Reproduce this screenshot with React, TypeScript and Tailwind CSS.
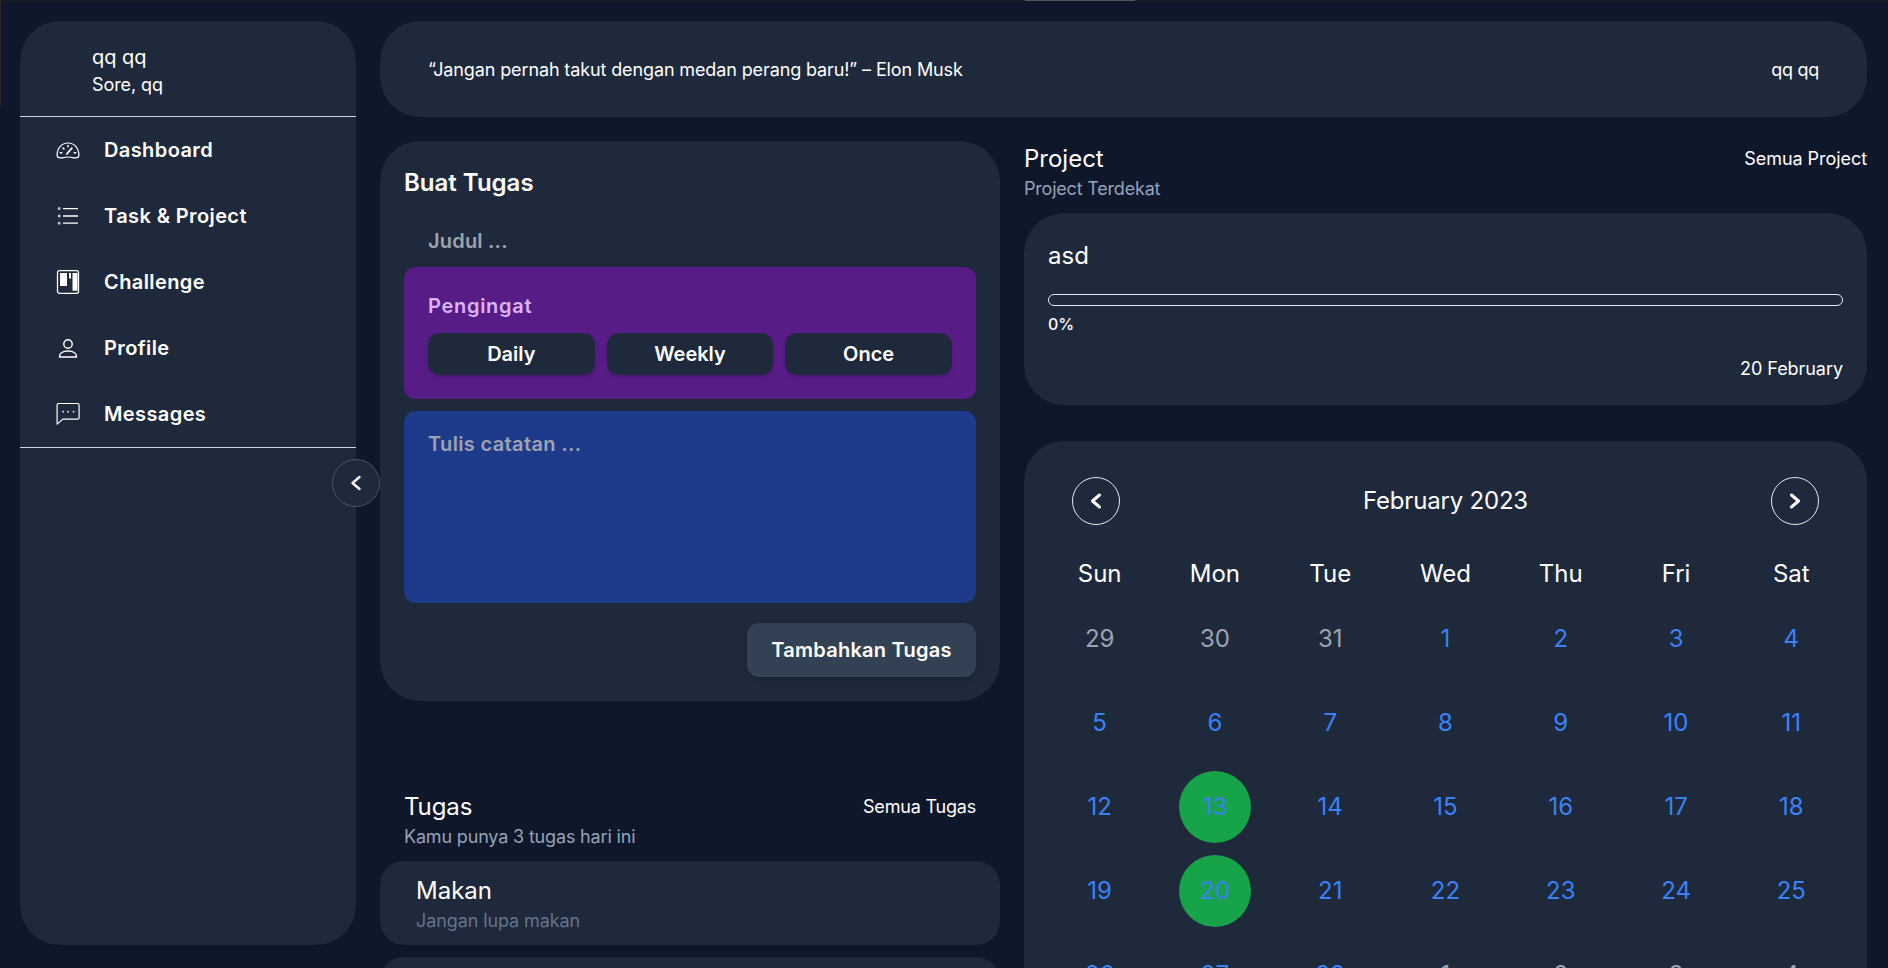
import React from "react";

const F = "font-['Inter','Noto_Sans',sans-serif]";

const GaugeIcon = () => (
  <svg width="26" height="24" viewBox="0 0 26 24" fill="none" stroke="white" strokeWidth="1.3" strokeLinecap="round" strokeLinejoin="round">
    <path d="M5 20.6 C3 20.6 1.2 20 1.2 17.8 C1.2 10 6.2 4.4 13 4.4 C19.8 4.4 24.8 10 24.8 17.8 C24.8 20 23 20.6 21 20.6 C18.5 20.6 17 19.6 13 19.6 C9 19.6 7.5 20.6 5 20.6 Z" />
    <path d="M11.6 16.4 L17.2 10" strokeWidth="1.8" />
    <path d="M13 7.2 V8.6 M7.6 9.8 L8.6 10.8 M4.6 15 H6.2 M19.8 15 H21.4" strokeWidth="1.6" />
  </svg>
);
const ListIcon = () => (
  <svg width="24" height="24" viewBox="0 0 24 24" fill="none" stroke="white" strokeWidth="1">
    <circle cx="3.2" cy="4.6" r="1" />
    <circle cx="3.2" cy="12" r="1" />
    <circle cx="3.2" cy="19.2" r="1" />
    <path d="M7 4.6 H22 M7 12 H22 M7 19.2 H22" strokeWidth="1.3" />
  </svg>
);
const BoardIcon = () => (
  <svg width="24" height="24" viewBox="0 0 24 24" fill="none">
    <rect x="1.5" y="0.7" width="21" height="22.6" rx="2" stroke="white" strokeWidth="1.3" />
    <rect x="4" y="3" width="7" height="13" fill="white" />
    <rect x="13" y="3" width="2" height="5.5" fill="white" />
    <rect x="16.5" y="3" width="5" height="17.7" fill="white" />
  </svg>
);
const UserIcon = () => (
  <svg width="24" height="24" viewBox="0 0 24 24" fill="none" stroke="white" strokeWidth="1.4">
    <circle cx="12" cy="8" r="4.2" />
    <path d="M3.4 21 C3.2 17 7 15 12 15 C17 15 20.8 17 20.6 21 Z" strokeLinejoin="round" />
  </svg>
);
const ChatIcon = () => (
  <svg width="26" height="26" viewBox="0 0 26 26" fill="none" stroke="white" strokeWidth="1.3" strokeLinejoin="round">
    <path d="M2.6 1.6 H23.4 C24.4 1.6 25 2.2 25 3.2 V17 C25 18 24.4 18.6 23.4 18.6 H7.4 L1.2 24 V3 C1.2 2.2 1.8 1.6 2.6 1.6 Z" />
    <circle cx="7.7" cy="10.5" r="0.95" fill="white" stroke="none" />
    <circle cx="13" cy="10.5" r="0.95" fill="white" stroke="none" />
    <circle cx="19" cy="10.5" r="0.95" fill="white" stroke="none" />
  </svg>
);
const Chevron = ({ right, sw }: { right?: boolean; sw: number }) => (
  <svg width="14" height="16" viewBox="0 0 14 16" fill="none" stroke="white" strokeWidth={sw} strokeLinecap="round" strokeLinejoin="round">
    <path d={right ? "M3.5 2 L10.5 8 L3.5 14" : "M10.5 2 L3.5 8 L10.5 14"} />
  </svg>
);

const NAV = [
  { label: "Dashboard", icon: <GaugeIcon /> },
  { label: "Task & Project", icon: <ListIcon /> },
  { label: "Challenge", icon: <BoardIcon /> },
  { label: "Profile", icon: <UserIcon /> },
  { label: "Messages", icon: <ChatIcon /> },
];

const WEEK = ["Sun", "Mon", "Tue", "Wed", "Thu", "Fri", "Sat"];
const DAYS: { d: number; muted?: boolean; on?: boolean }[] = [
  { d: 29, muted: true }, { d: 30, muted: true }, { d: 31, muted: true },
  ...Array.from({ length: 28 }, (_, i) => ({ d: i + 1, on: i + 1 === 13 || i + 1 === 20 })),
  { d: 1, muted: true }, { d: 2, muted: true }, { d: 3, muted: true }, { d: 4, muted: true },
];

function Sidebar() {
  return (
    <aside className="relative w-[336px] h-[924px] shrink-0 rounded-[40px] bg-[#1e293b] text-white">
      <div className="h-[96px] border-b border-[#cbd5e1] pl-[72px] pt-[23px]">
        <p className="text-[20px] leading-[26px]">qq qq</p>
        <p className="mt-[2px] text-[18px] leading-[26px] tracking-[-0.1px]">Sore, qq</p>
      </div>
      <nav className="border-b border-[#cbd5e1]">
        {NAV.map((n) => (
          <div key={n.label} className="flex h-[66px] items-center">
            <span className="flex w-[84px] shrink-0 items-center pl-[36px]">
              <span className="flex w-[24px] justify-center">{n.icon}</span>
            </span>
            <span className="text-[20px] font-semibold tracking-[0.4px]">{n.label}</span>
          </div>
        ))}
      </nav>
      <button className="absolute left-[312px] top-[438px] flex h-[48px] w-[48px] items-center justify-center rounded-full border border-[#475569] bg-[#1e293b]">
        <Chevron sw={2.4} />
      </button>
    </aside>
  );
}

function TaskCard() {
  return (
    <section className="h-[560px] rounded-[40px] bg-[#1e293b] p-6 text-white">
      <h2 className="text-[24px] font-semibold leading-[36px]">Buat Tugas</h2>
      <div className="mt-[22px] px-6 text-[20px] font-semibold leading-[36px] tracking-[0.2px] text-[#9ca3af]">Judul ...</div>
      <div className="mt-[8px] h-[132px] rounded-xl bg-[#581c87] px-6 pt-[24px]">
        <p className="text-[20px] font-semibold leading-[30px] tracking-[0.7px] text-[#d8b4fe]">Pengingat</p>
        <div className="mt-[12px] grid grid-cols-3 gap-3">
          {["Daily", "Weekly", "Once"].map((t) => (
            <div key={t} className="flex h-[42px] items-center justify-center rounded-xl bg-[#1e293b] text-[20px] font-semibold shadow-md">{t}</div>
          ))}
        </div>
      </div>
      <div className="mt-3 h-[192px] rounded-xl bg-[#1e3a8a] px-6 pt-[18px] text-[20px] font-semibold leading-[30px] tracking-[0.35px] text-[#9ca3af]">Tulis catatan ...</div>
      <div className="mt-5 flex justify-end">
        <button className="flex h-[54px] w-[229px] items-center justify-center rounded-xl bg-[#334155] text-[20px] font-semibold tracking-[0.25px] shadow-md">Tambahkan Tugas</button>
      </div>
    </section>
  );
}

function Calendar() {
  return (
    <section className="rounded-[40px] bg-[#1e293b] p-6 pb-0 text-white">
      <div className="flex items-center justify-between px-6 py-3">
        <button className="flex h-[48px] w-[48px] items-center justify-center rounded-full border border-[#e2e8f0]">
          <Chevron sw={3} />
        </button>
        <span className="text-[24px] tracking-[-0.2px]">February 2023</span>
        <button className="flex h-[48px] w-[48px] items-center justify-center rounded-full border border-[#e2e8f0]">
          <Chevron right sw={3} />
        </button>
      </div>
      <div className="mt-3 grid grid-cols-7 gap-3">
        {WEEK.map((w) => (
          <div key={w} className="flex h-[42px] items-center justify-center pt-[7px] text-[24px]">{w}</div>
        ))}
        {DAYS.map((c, i) => (
          <div key={i} className="flex h-[72px] items-center justify-center">
            <div className={`flex h-[72px] w-[72px] items-center justify-center rounded-full text-[24px] ${c.on ? "bg-[#16a34a]" : ""} ${c.muted ? "text-[#9ca3af]" : "text-[#3b82f6]"}`}>{c.d}</div>
          </div>
        ))}
      </div>
    </section>
  );
}

export default function App() {
  return (
    <div className={`relative h-screen overflow-hidden bg-[#0f172a] ${F}`}>
      <div className="h-px bg-[#1e1e1e]">
        <div className="ml-[1025px] h-px w-[110px] bg-[#555555]" />
      </div>
      <div className="absolute left-0 top-0 h-[105px] w-px bg-[#2a2a2a]" />
      <div className="flex gap-6 pl-5 pt-5">
        <Sidebar />
        <main className="w-[1487px] shrink-0">
          <header className="flex h-[96px] items-center justify-between rounded-[40px] bg-[#1e293b] px-12 text-[18px] text-white">
            <span className="tracking-[-0.12px]">“Jangan pernah takut dengan medan perang baru!” – Elon Musk</span>
            <span className="tracking-[-0.3px]">qq qq</span>
          </header>
          <div className="mt-6 grid grid-cols-[620px_843px] gap-6">
            <div>
              <TaskCard />
              <div className="mt-[90px] flex items-start justify-between px-6">
                <div>
                  <h3 className="text-[24px] leading-[32px] tracking-[-0.1px] text-white">Tugas</h3>
                  <p className="text-[18px] leading-[28px] tracking-[-0.17px] text-[#94a3b8]">Kamu punya 3 tugas hari ini</p>
                </div>
                <span className="text-[18px] leading-[32px] tracking-[-0.2px] text-white">Semua Tugas</span>
              </div>
              <div className="mt-[10px] flex flex-col gap-3">
                <div className="h-[84px] rounded-3xl bg-[#1e293b] px-[36px] pt-[13px]">
                  <p className="text-[24px] leading-[33px] text-white">Makan</p>
                  <p className="text-[18px] leading-[28px] tracking-[-0.1px] text-[#64748b]">Jangan lupa makan</p>
                </div>
                <div className="h-[84px] rounded-3xl bg-[#1e293b]" />
              </div>
            </div>
            <div>
              <div className="flex items-start justify-between">
                <div>
                  <h3 className="text-[24px] leading-[36px] text-white">Project</h3>
                  <p className="text-[18px] leading-[24px] tracking-[-0.2px] text-[#94a3b8]">Project Terdekat</p>
                </div>
                <span className="text-[18px] leading-[36px] tracking-[-0.05px] text-white">Semua Project</span>
              </div>
              <div className="mt-3 h-[192px] rounded-[40px] bg-[#1e293b] px-6 pt-[25px] text-white">
                <p className="text-[24px] leading-[36px]">asd</p>
                <div className="mt-[20px] h-[12px] rounded-full border border-[#e2e8f0]" />
                <p className="mt-[6px] text-[16px] font-medium leading-[24px]">0%</p>
                <p className="mt-[21px] text-right text-[18px] leading-[24px] tracking-[-0.05px]">20 February</p>
              </div>
              <div className="mt-9">
                <Calendar />
              </div>
            </div>
          </div>
        </main>
      </div>
    </div>
  );
}
